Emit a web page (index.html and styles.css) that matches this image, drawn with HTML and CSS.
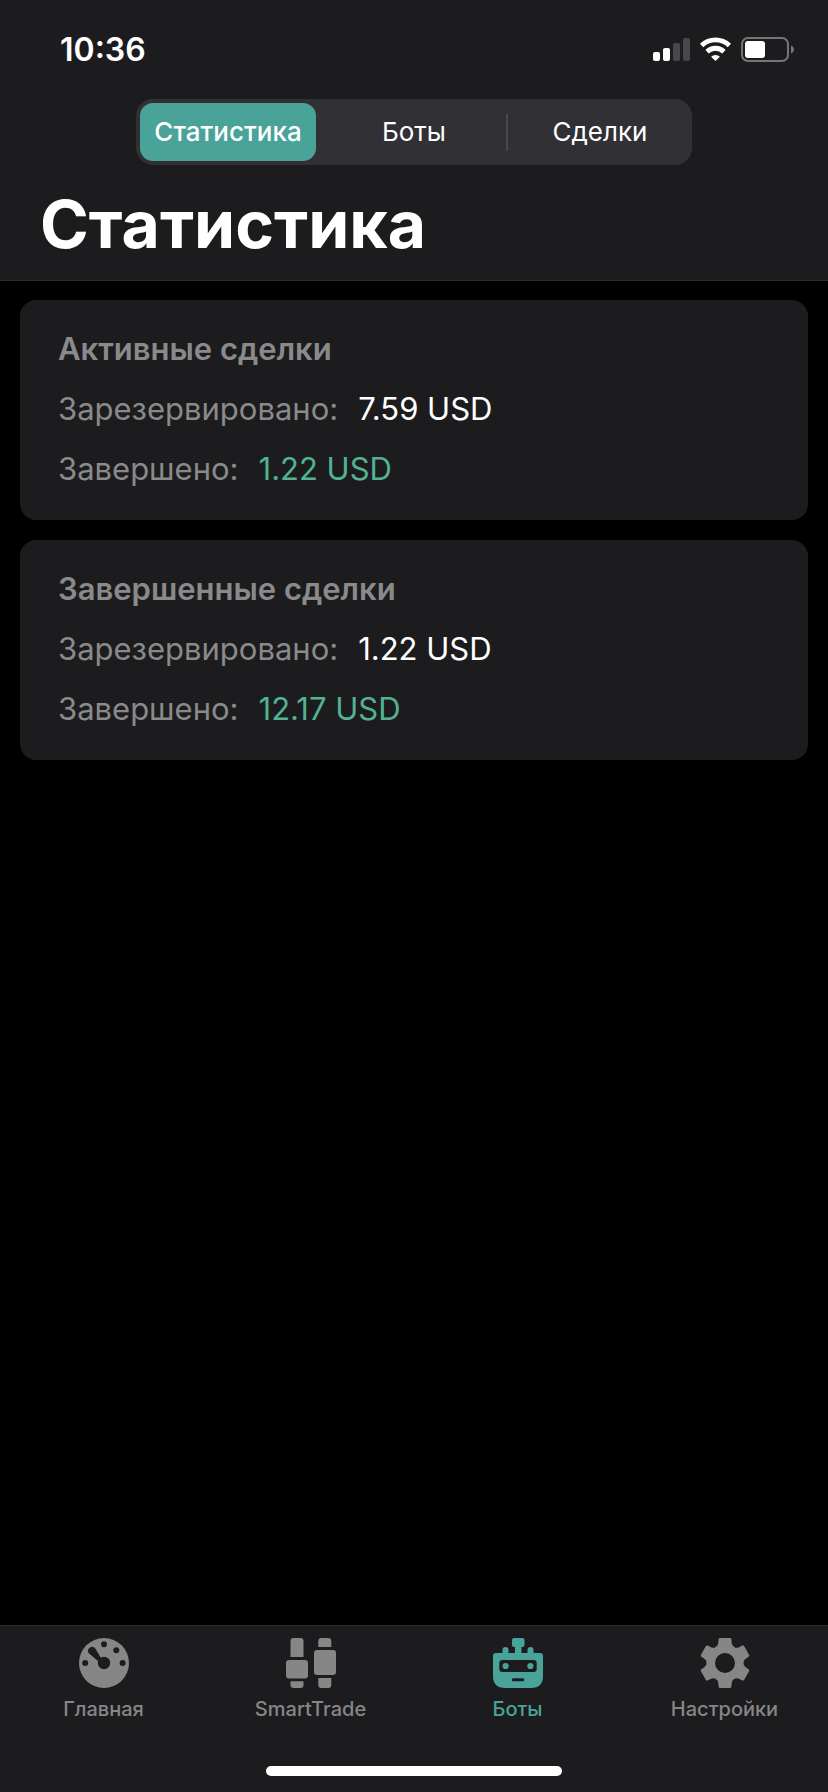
FILE: index.html
```html
<!DOCTYPE html>
<html lang="ru">
<head>
  <meta charset="UTF-8">
  <title>Статистика</title>
  <meta name="viewport" content="width=device-width, initial-scale=1.0">
  <link rel="stylesheet" href="styles.css">
</head>
<body>

<header class="header">
  <div class="status-bar">
    <span class="time">10:36</span>
    <svg class="status-icons" viewBox="0 0 141 25" aria-hidden="true">
      <!-- Signal -->
      <rect x="0" y="15" width="7" height="9" rx="2" fill="#fff"/>
      <rect x="10" y="11" width="7" height="13" rx="2" fill="#fff"/>
      <rect x="20" y="6" width="7" height="18" rx="2" fill="#48484a"/>
      <rect x="30" y="1" width="7" height="23" rx="2" fill="#48484a"/>
      <!-- Wi-Fi -->
      <g fill="none" stroke="#fff" stroke-width="4.8">
        <path d="M48.6 8.4a20 20 0 0 1 27.8 0"/>
        <path d="M54.1 14.7a12 12 0 0 1 16.8 0"/>
      </g>
      <path d="M62.5 24l-4.4-4.3a6.6 6.6 0 0 1 8.8 0z" fill="#fff"/>
      <!-- Battery -->
      <rect x="89" y="1" width="46" height="23" rx="6" fill="none" stroke="#757577" stroke-width="2"/>
      <rect x="92" y="4" width="20" height="17" rx="3" fill="#fff"/>
      <path d="M138 8.5c4 1.5 4 6.5 0 8z" fill="#757577"/>
    </svg>
  </div>

  <div class="segments">
    <button type="button" class="segment active">Статистика</button>
    <button type="button" class="segment">Боты</button>
    <button type="button" class="segment divided">Сделки</button>
  </div>

  <h1>Статистика</h1>
</header>

<main class="content">
  <section class="card">
    <h2>Активные сделки</h2>
    <p class="row"><span>Зарезервировано:</span> <span class="value">7.59 USD</span></p>
    <p class="row"><span>Завершено:</span> <span class="value profit">1.22 USD</span></p>
  </section>

  <section class="card">
    <h2>Завершенные сделки</h2>
    <p class="row"><span>Зарезервировано:</span> <span class="value">1.22 USD</span></p>
    <p class="row"><span>Завершено:</span> <span class="value profit">12.17 USD</span></p>
  </section>
</main>

<footer class="footer">
  <nav class="tab-bar">
    <a href="#home" class="tab">
      <svg class="tab-icon" viewBox="0 0 50 50" aria-hidden="true">
        <circle cx="25" cy="25" r="25" fill="currentColor"/>
        <g class="cut">
          <circle cx="25" cy="25" r="6.2"/>
          <circle cx="6.2" cy="25" r="3"/>
          <circle cx="25" cy="6.2" r="3"/>
          <circle cx="37.3" cy="12.3" r="3"/>
          <circle cx="43.6" cy="25" r="3"/>
          <path d="M9.8 15.2a3.9 3.9 0 0 1 6.5-4.6L22 20l-3 3z"/>
        </g>
      </svg>
      <span>Главная</span>
    </a>
    <a href="#smart-trade" class="tab">
      <svg class="tab-icon" viewBox="0 0 50 50" fill="currentColor" aria-hidden="true">
        <path d="M4.5 19V3q0-3 3-3h7q3 0 3 3v16z"/>
        <rect x="0" y="22" width="22" height="18.5" rx="3"/>
        <path d="M4.5 43.3h13V47q0 3-3 3h-7q-3 0-3-3z"/>
        <path d="M32.3 9V3q0-3 3-3h7q3 0 3 3v6z"/>
        <rect x="28" y="12" width="22" height="25" rx="3"/>
        <path d="M32.3 40h13v7q0 3-3 3h-7q-3 0-3-3z"/>
      </svg>
      <span>SmartTrade</span>
    </a>
    <a href="#bots" class="tab active">
      <svg class="tab-icon" viewBox="0 0 50 50" fill="currentColor" aria-hidden="true">
        <path d="M0 18q0-3 3-3h6.500v-3a3 3 0 0 1 6 0v3H22V9h-1q-2 0-2-2V2q0-2 2-2h8.500q2 0 2 2v5q0 2-2 2h-1v6h6v-3a3 3 0 0 1 6 0v3H47q3 0 3 3v20q0 12-12 12H12Q0 50 0 38z"/>
        <rect class="cut" x="6.3" y="22" width="37.4" height="12" rx="3"/>
        <circle cx="12.6" cy="28" r="3.1"/>
        <circle cx="37.4" cy="28" r="3.1"/>
        <rect class="cut" x="18.8" y="40.2" width="12.5" height="3" rx="1.5"/>
      </svg>
      <span>Боты</span>
    </a>
    <a href="#settings" class="tab">
      <svg class="tab-icon" viewBox="0 0 50 50" fill="currentColor" aria-hidden="true">
        <defs>
          <path id="tooth" d="M25 25L15.7 9Q18.2 7.800 18.300 5L18.600 1.300Q18.800 0 20.200 0h9.600q1.400 0 1.600 1.300L31.700 5q.1 2.800 2.600 4z"/>
        </defs>
        <circle cx="25" cy="25" r="18"/>
        <use href="#tooth"/>
        <use href="#tooth" transform="rotate(60 25 25)"/>
        <use href="#tooth" transform="rotate(120 25 25)"/>
        <use href="#tooth" transform="rotate(180 25 25)"/>
        <use href="#tooth" transform="rotate(240 25 25)"/>
        <use href="#tooth" transform="rotate(300 25 25)"/>
        <circle class="cut" cx="25" cy="25" r="10"/>
      </svg>
      <span>Настройки</span>
    </a>
  </nav>
  <div class="home-indicator"></div>
</footer>

</body>
</html>
```

FILE: styles.css
```css
* {
  box-sizing: border-box;
}

body {
  font-family: Inter, "Liberation Sans", sans-serif;
  margin: 0;
  background: #000;
  color: #fff;
  min-height: 100vh;
  display: flex;
  flex-direction: column;
}

.header {
  background: #1c1c1e;
  border-bottom: 1px solid #2b2b2d;
  padding-bottom: 16px;
}

.status-bar {
  height: 99px;
  padding: 0 34px 0 60px;
  display: flex;
  align-items: center;
  justify-content: space-between;
}

.time {
  font-size: 32px;
  font-weight: 600;
}

.status-icons {
  width: 141px;
  height: 25px;
}

.segments {
  display: grid;
  grid-template-columns: repeat(3, 176px);
  gap: 10px;
  width: max-content;
  height: 66px;
  margin: 0 auto 19px;
  padding: 4px;
  background: #313135;
  border-radius: 17px;
}

.segment {
  position: relative;
  padding: 0 0 2px;
  border: none;
  border-radius: 13px;
  background: none;
  color: #fff;
  font-family: inherit;
  font-size: 26px;
  font-weight: 400;
  cursor: pointer;
}

.segment.active {
  background: #4aa398;
  font-weight: 500;
}

.segment.divided::before {
  content: "";
  position: absolute;
  left: -6px;
  top: 11px;
  bottom: 10px;
  width: 2px;
  background: #48484b;
}

h1 {
  margin: 0;
  padding: 0 40px;
  font-size: 66px;
  line-height: 80px;
  font-weight: 700;
}

.content {
  flex: 1;
  display: flex;
  flex-direction: column;
  gap: 20px;
  padding: 19px 20px;
}

.card {
  padding: 19px 38px 21px;
  background: #1c1c1e;
  border-radius: 16px;
  color: #8a8a8b;
  font-size: 31px;
  line-height: 60px;
}

.card h2 {
  margin: 0;
  font-size: 31px;
  font-weight: 600;
}

.row {
  display: flex;
  gap: 20px;
  margin: 0;
}

.value {
  color: #fff;
}

.value.profit {
  color: #52b293;
}

.footer {
  background: #1c1c1e;
  border-top: 1px solid #2b2b2d;
  padding: 12px 0 16px;
}

.tab-bar {
  display: grid;
  grid-template-columns: repeat(4, 1fr);
}

.tab {
  display: flex;
  flex-direction: column;
  align-items: center;
  gap: 9px;
  color: #868687;
  font-size: 20px;
  line-height: 24px;
  font-weight: 500;
  text-decoration: none;
}

.tab.active {
  color: #4aa398;
}

.tab-icon {
  width: 50px;
  height: 50px;
}

.cut {
  fill: #1c1c1e;
}

.home-indicator {
  width: 296px;
  height: 10px;
  margin: 45px auto 0;
  border-radius: 5px;
  background: #fff;
}
```
